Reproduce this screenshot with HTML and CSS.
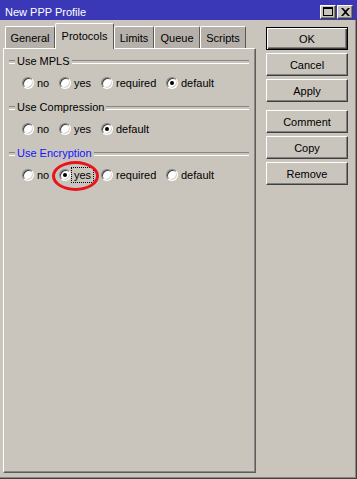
FILE: index.html
```html
<!DOCTYPE html>
<html>
<head>
<meta charset="utf-8">
<link rel="stylesheet" href="styles.css">
</head>
<body>
<div class="window">
  <div class="titlebar">
    <span class="title">New PPP Profile</span>
    <div class="tb-buttons">
      <span class="tb-btn"><svg width="10" height="9" viewBox="0 0 10 9"><rect x="0.5" y="0.5" width="9" height="8" fill="none" stroke="#000"/><rect x="0" y="0" width="10" height="2" fill="#000"/></svg></span>
      <span class="tb-btn"><svg width="9" height="8" viewBox="0 0 9 8"><path d="M0 0h2l2.5 2.5L7 0h2L5.5 4 9 8H7L4.5 5.5 2 8H0l3.5-4z" fill="#000"/></svg></span>
    </div>
  </div>
  <div class="body">
    <div class="left">
      <div class="tabs">
        <span class="tab t-general">General</span>
        <span class="tab active t-protocols">Protocols</span>
        <span class="tab t-limits">Limits</span>
        <span class="tab t-queue">Queue</span>
        <span class="tab t-scripts">Scripts</span>
      </div>
      <div class="panel">
        <div class="group">
          <div class="group-head"><span class="group-label">Use MPLS</span></div>
          <div class="radios">
            <label class="radio w-no"><span class="dot"></span>no</label>
            <label class="radio w-yes"><span class="dot"></span>yes</label>
            <label class="radio w-req"><span class="dot"></span>required</label>
            <label class="radio"><span class="dot checked"></span>default</label>
          </div>
        </div>
        <div class="group">
          <div class="group-head"><span class="group-label">Use Compression</span></div>
          <div class="radios">
            <label class="radio w-no"><span class="dot"></span>no</label>
            <label class="radio w-yes"><span class="dot"></span>yes</label>
            <label class="radio"><span class="dot checked"></span>default</label>
          </div>
        </div>
        <div class="group">
          <div class="group-head"><span class="group-label blue">Use Encryption</span></div>
          <div class="radios">
            <label class="radio w-no"><span class="dot"></span>no</label>
            <label class="radio w-yes marked"><span class="dot checked"></span><span class="focus">yes</span><span class="ring"></span></label>
            <label class="radio w-req"><span class="dot"></span>required</label>
            <label class="radio"><span class="dot"></span>default</label>
          </div>
        </div>
      </div>
    </div>
    <div class="right">
      <button class="btn default">OK</button>
      <button class="btn">Cancel</button>
      <button class="btn">Apply</button>
      <button class="btn sep">Comment</button>
      <button class="btn">Copy</button>
      <button class="btn">Remove</button>
    </div>
  </div>
</div>
</body>
</html>
```

FILE: styles.css
```css
* { box-sizing: border-box; }
html, body { margin: 0; padding: 0; }
body {
  width: 357px;
  height: 479px;
  background: #c9c5bd;
  font-family: "Liberation Sans", Arial, sans-serif;
  font-size: 11px;
  color: #000;
  overflow: hidden;
}
.window {
  width: 357px;
  height: 479px;
  background: #c9c5bd;
  box-shadow: inset -1px -1px #404040, inset -2px -2px #8a8781;
}
.titlebar {
  height: 20px;
  background: #3b38b8;
  color: #fff;
  display: flex;
  align-items: center;
  padding-left: 5px;
  padding-right: 4px;
}
.title { padding-top: 4px; }
.tb-buttons { margin-left: auto; display: flex; gap: 1px; padding-top: 3px; }
.tb-btn {
  width: 16px;
  height: 14px;
  background: #c9c5bd;
  border: 1px solid;
  border-color: #fff #404040 #404040 #fff;
  box-shadow: inset -1px -1px #808080;
  display: flex;
  align-items: center;
  justify-content: center;
}
.body {
  display: flex;
  padding-top: 3px;
}
.left {
  margin-left: 3px;
  width: 253px;
  display: flex;
  flex-direction: column;
}
.tabs {
  height: 25px;
  display: flex;
  align-items: flex-end;
  padding-left: 2px;
  position: relative;
  z-index: 2;
}
.tab {
  height: 22px;
  background: #b5b1aa;
  border-top: 1px solid #fff;
  border-left: 1px solid #fff;
  border-right: 1px solid #5a5854;
  border-top-left-radius: 2px;
  border-top-right-radius: 2px;
  display: flex;
  align-items: center;
  justify-content: center;
  padding-top: 1px;
}
.tab.active {
  height: 26px;
  margin-bottom: -1px;
  background: #c9c5bd;
  padding-bottom: 3px;
}
.t-general { width: 50px; }
.t-protocols { width: 59px; }
.t-limits { width: 40px; }
.t-queue { width: 46px; }
.t-scripts { width: 46px; }
.panel {
  height: 425px;
  border-top: 1px solid #fff;
  border-left: 1px solid #fff;
  border-right: 1px solid #5f5d59;
  border-bottom: 1px solid #5f5d59;
  box-shadow: inset -1px -1px #8c8984;
  padding-top: 5px;
}
.group { margin-bottom: 9px; }
.group-head {
  height: 14px;
  display: flex;
  align-items: center;
  padding: 0 6px 0 5px;
}
.group-head::before,
.group-head::after {
  content: "";
  height: 2px;
  border-top: 1px solid #8a8781;
  border-bottom: 1px solid #fff;
  margin-top: 2px;
}
.group-head::before { width: 6px; }
.group-head::after { flex: 1; }
.group-label { padding: 0 2px 0 2px; }
.group-label.blue { color: #1414ff; }
.radios {
  display: flex;
  align-items: center;
  height: 16px;
  margin-top: 7px;
  padding-left: 18px;
}
.radio {
  display: flex;
  align-items: center;
  position: relative;
}
.w-no { width: 37px; }
.w-yes { width: 42px; }
.w-req { width: 65px; }
.dot {
  width: 12px;
  height: 12px;
  border-radius: 50%;
  background: #fff;
  border: 1px solid;
  border-color: #808080 #fff #fff #808080;
  box-shadow: inset 1px 1px #404040, inset -1px -1px #d4d0c8;
  margin-right: 3px;
  position: relative;
  flex: none;
}
.dot.checked::after {
  content: "";
  position: absolute;
  left: 3px;
  top: 3px;
  width: 4px;
  height: 4px;
  border-radius: 50%;
  background: #000;
}
.focus {
  outline: 1px dotted #000;
  padding: 1px 2px;
  margin-left: -2px;
}
.ring {
  position: absolute;
  left: -7px;
  top: -7px;
  width: 47px;
  height: 30px;
  border: 3px solid #e8141c;
  border-radius: 50%;
}
.right {
  margin-left: 10px;
  margin-top: 4px;
  width: 82px;
  display: flex;
  flex-direction: column;
  gap: 3px;
}
.btn {
  width: 82px;
  height: 23px;
  font-family: inherit;
  font-size: 11px;
  color: #000;
  background: #c9c5bd;
  border: 1px solid;
  border-color: #fff #404040 #404040 #fff;
  box-shadow: inset -1px -1px #808080;
  padding: 0;
}
.btn.default {
  border: 1px solid #000;
  box-shadow: inset 1px 1px #fff, inset -1px -1px #404040, inset -2px -2px #808080;
}
.btn.sep { margin-top: 5px; }
```
